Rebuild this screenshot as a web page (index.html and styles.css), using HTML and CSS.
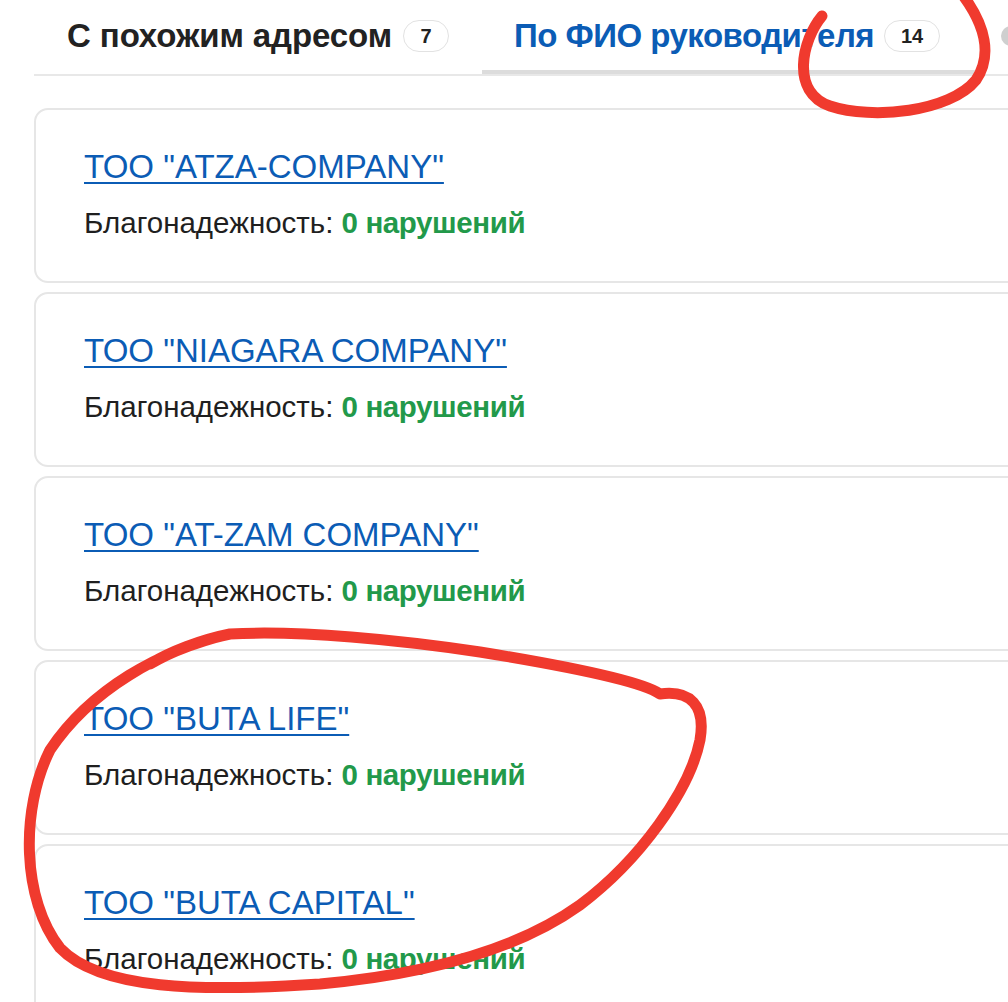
FILE: index.html
```html
<!DOCTYPE html>
<html lang="ru">
<head>
<meta charset="utf-8">
<title>Связанные компании</title>
<link rel="stylesheet" href="styles.css">
</head>
<body>
<div class="page">
  <nav class="tabs">
    <div class="tab tab-first">
      <span class="tab-label">С похожим адресом</span>
      <span class="badge badge-sm">7</span>
    </div>
    <div class="tab tab-active">
      <span class="tab-label">По ФИО руководителя</span>
      <span class="badge">14</span>
    </div>
    <div class="tab tab-muted">
      <span class="dot"></span>
    </div>
  </nav>

  <div class="list">
    <div class="card">
      <a class="card-title" href="#">ТОО "ATZA-COMPANY"</a>
      <div class="card-meta">Благонадежность: <span class="ok">0 нарушений</span></div>
    </div>
    <div class="card">
      <a class="card-title" href="#">ТОО "NIAGARA COMPANY"</a>
      <div class="card-meta">Благонадежность: <span class="ok">0 нарушений</span></div>
    </div>
    <div class="card">
      <a class="card-title" href="#">ТОО "AT-ZAM COMPANY"</a>
      <div class="card-meta">Благонадежность: <span class="ok">0 нарушений</span></div>
    </div>
    <div class="card">
      <a class="card-title" href="#">ТОО "BUTA LIFE"</a>
      <div class="card-meta">Благонадежность: <span class="ok">0 нарушений</span></div>
    </div>
    <div class="card">
      <a class="card-title" href="#">ТОО "BUTA CAPITAL"</a>
      <div class="card-meta">Благонадежность: <span class="ok">0 нарушений</span></div>
    </div>
  </div>

  <svg class="marks" width="1008" height="1002" viewBox="0 0 1008 1002" aria-hidden="true">
    <path d="M822 16 C 802 40, 790 92, 830 106 C 872 120, 950 112, 976 80 C 992 56, 986 26, 962 -6" />
    <path d="M230 634 C 160 650, 90 690, 50 750 C 20 810, 22 900, 60 948 C 100 990, 200 992, 320 984 C 430 974, 520 948, 580 905 C 640 860, 690 790, 700 740 C 706 705, 690 690, 660 694 C 640 680, 560 665, 480 652 C 400 640, 300 630, 230 634 C 200 640, 170 652, 150 664" />
  </svg>
</div>
</body>
</html>
```
FILE: styles.css
```css
* {
  box-sizing: border-box;
}

html, body {
  margin: 0;
  padding: 0;
  background: #ffffff;
}

body {
  width: 1008px;
  height: 1002px;
  overflow: hidden;
  font-family: "Liberation Sans", Arial, Helvetica, sans-serif;
  color: #1f1f1f;
}

.page {
  position: relative;
  width: 1008px;
  height: 1002px;
  padding-left: 34px;
}

.tabs {
  display: flex;
  width: 1100px;
  height: 76px;
  border-bottom: 2px solid #e8e8e8;
}

.tab {
  display: flex;
  align-items: center;
  gap: 11px;
  height: 74px;
  padding: 0 0 2px 33px;
  white-space: nowrap;
}

.tab-first {
  width: 448px;
}

.tab-active {
  width: 493px;
  padding-left: 32px;
  gap: 10px;
  border-bottom: 4px solid #dcdcdc;
  margin-bottom: -2px;
  padding-top: 4px;
}

.tab-label {
  font-size: 33px;
  font-weight: 700;
  color: #222222;
  letter-spacing: -0.1px;
}

.tab-active .tab-label {
  color: #0b5cb5;
  letter-spacing: -0.5px;
}

.tab-muted {
  padding-left: 26px;
}

.dot {
  display: block;
  width: 20px;
  height: 20px;
  border-radius: 50%;
  background: #cfcfcf;
}

.badge {
  display: inline-flex;
  align-items: center;
  justify-content: center;
  height: 32px;
  min-width: 56px;
  padding: 0 14px;
  border: 1.5px solid #e2e2e2;
  border-radius: 16px;
  font-size: 20px;
  font-weight: 700;
  color: #222222;
}

.badge-sm {
  min-width: 46px;
}

.list {
  display: flex;
  flex-direction: column;
  gap: 9px;
  width: 1100px;
  margin-top: 32px;
}

.card {
  height: 175px;
  padding: 38px 48px 0 48px;
  border: 2px solid #e6e6e6;
  border-radius: 14px;
  background: #ffffff;
}

.card-title {
  display: inline-block;
  font-size: 33px;
  line-height: 38px;
  color: #0b5cb5;
  text-decoration: underline;
  text-decoration-thickness: 2px;
  text-underline-offset: 4px;
}

.card-meta {
  margin-top: 20px;
  font-size: 29.5px;
  line-height: 34px;
  color: #1f1f1f;
}

.ok {
  color: #22994a;
  font-weight: 700;
  letter-spacing: -0.4px;
}

.marks {
  position: absolute;
  left: 0;
  top: 0;
  pointer-events: none;
}

.marks path {
  fill: none;
  stroke: #f03a2e;
  stroke-width: 11;
  stroke-linecap: round;
  stroke-linejoin: round;
}
```
